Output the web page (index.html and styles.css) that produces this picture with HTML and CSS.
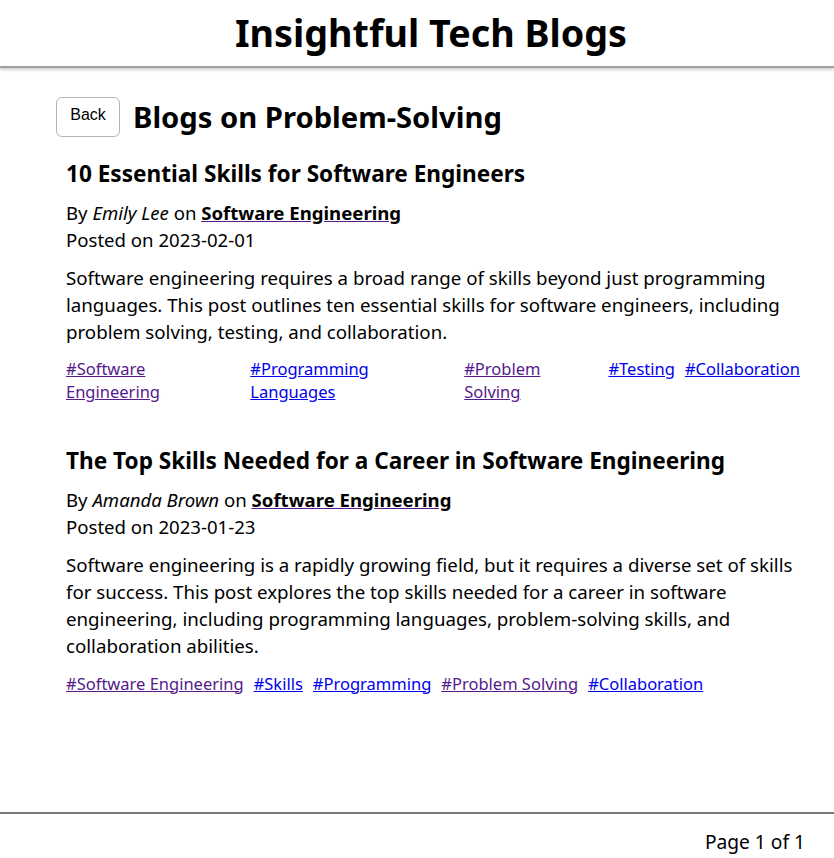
FILE: index.html
```html
<!DOCTYPE html>
<html lang="en">
<head>
<meta charset="utf-8">
<title>Insightful Tech Blogs</title>
<link rel="stylesheet" href="styles.css">
</head>
<body>
<header class="site-header">
  <h1 class="site-title">Insightful Tech Blogs</h1>
</header>
<main class="content">
  <div class="page-head">
    <button class="back-btn" type="button">Back</button>
    <h2 class="page-title">Blogs on Problem-Solving</h2>
  </div>
  <article class="post">
    <h3 class="post-title">10 Essential Skills for Software Engineers</h3>
    <p class="meta">By <em>Emily Lee</em> on <a class="category" href="#">Software Engineering</a><br>Posted on 2023-02-01</p>
    <p class="excerpt">Software engineering requires a broad range of skills beyond just programming languages. This post outlines ten essential skills for software engineers, including problem solving, testing, and collaboration.</p>
    <div class="tags">
      <a class="tag visited" href="#">#Software Engineering</a>
      <a class="tag" href="#">#Programming Languages</a>
      <a class="tag visited" href="#">#Problem Solving</a>
      <a class="tag" href="#">#Testing</a>
      <a class="tag" href="#">#Collaboration</a>
    </div>
  </article>
  <article class="post">
    <h3 class="post-title">The Top Skills Needed for a Career in Software Engineering</h3>
    <p class="meta">By <em>Amanda Brown</em> on <a class="category" href="#">Software Engineering</a><br>Posted on 2023-01-23</p>
    <p class="excerpt">Software engineering is a rapidly growing field, but it requires a diverse set of skills for success. This post explores the top skills needed for a career in software engineering, including programming languages, problem-solving skills, and collaboration abilities.</p>
    <div class="tags">
      <a class="tag visited" href="#">#Software Engineering</a>
      <a class="tag" href="#">#Skills</a>
      <a class="tag" href="#">#Programming</a>
      <a class="tag visited" href="#">#Problem Solving</a>
      <a class="tag" href="#">#Collaboration</a>
    </div>
  </article>
</main>
<footer class="site-footer">
  <span class="pager">Page 1 of 1</span>
</footer>
</body>
</html>
```
FILE: styles.css
```css
html, body {
  margin: 0;
  padding: 0;
}
body {
  font-family: "Noto Sans", "Open Sans", sans-serif;
  color: #000;
  background: #fff;
  min-height: 100vh;
  display: flex;
  flex-direction: column;
}
.site-header {
  border-bottom: 2px solid #a0a0a0;
  box-shadow: 0 2px 3px rgba(0, 0, 0, 0.18);
  height: 66px;
  display: flex;
  align-items: center;
  justify-content: center;
  padding-left: 28px;
}
.site-title {
  margin: 0;
  font-size: 37.7px;
  font-weight: 700;
  line-height: 1;
}
.content {
  flex: 1;
  padding: 29px 24px 0 56px;
}
.page-head {
  display: flex;
  align-items: center;
  gap: 13px;
}
.back-btn {
  font-family: "Liberation Sans", Arial, sans-serif;
  font-size: 16px;
  background: #fff;
  color: #000;
  border: 1px solid #b4b4b4;
  border-radius: 6px;
  width: 64px;
  height: 40px;
  padding: 0 0 4px;
}
.page-title {
  margin: 0;
  font-size: 29.2px;
  font-weight: 700;
  line-height: 40px;
}
.post {
  padding: 0 10px;
  margin-bottom: 43px;
}
.post-title {
  margin: 22px 0 10px;
  font-size: 22.6px;
  font-weight: 700;
  line-height: 30px;
}
.meta {
  margin: 0;
  font-size: 18.6px;
  line-height: 27px;
}
.category {
  color: #000;
  font-weight: 700;
  text-decoration-color: #551a8b;
}
.excerpt {
  margin: 12px 0 12px;
  font-size: 18.7px;
  line-height: 26.8px;
}
.tags {
  display: flex;
  gap: 10px;
}
.tag {
  font-size: 16.5px;
  line-height: 23px;
  color: #0000ee;
}
.tag.visited {
  color: #551a8b;
}
.site-footer {
  border-top: 2px solid #777;
  height: 46px;
  display: flex;
  align-items: flex-end;
  justify-content: flex-end;
  padding: 0 29px 3px 0;
  box-sizing: border-box;
}
.pager {
  font-size: 19.2px;
  line-height: 26px;
}
```
